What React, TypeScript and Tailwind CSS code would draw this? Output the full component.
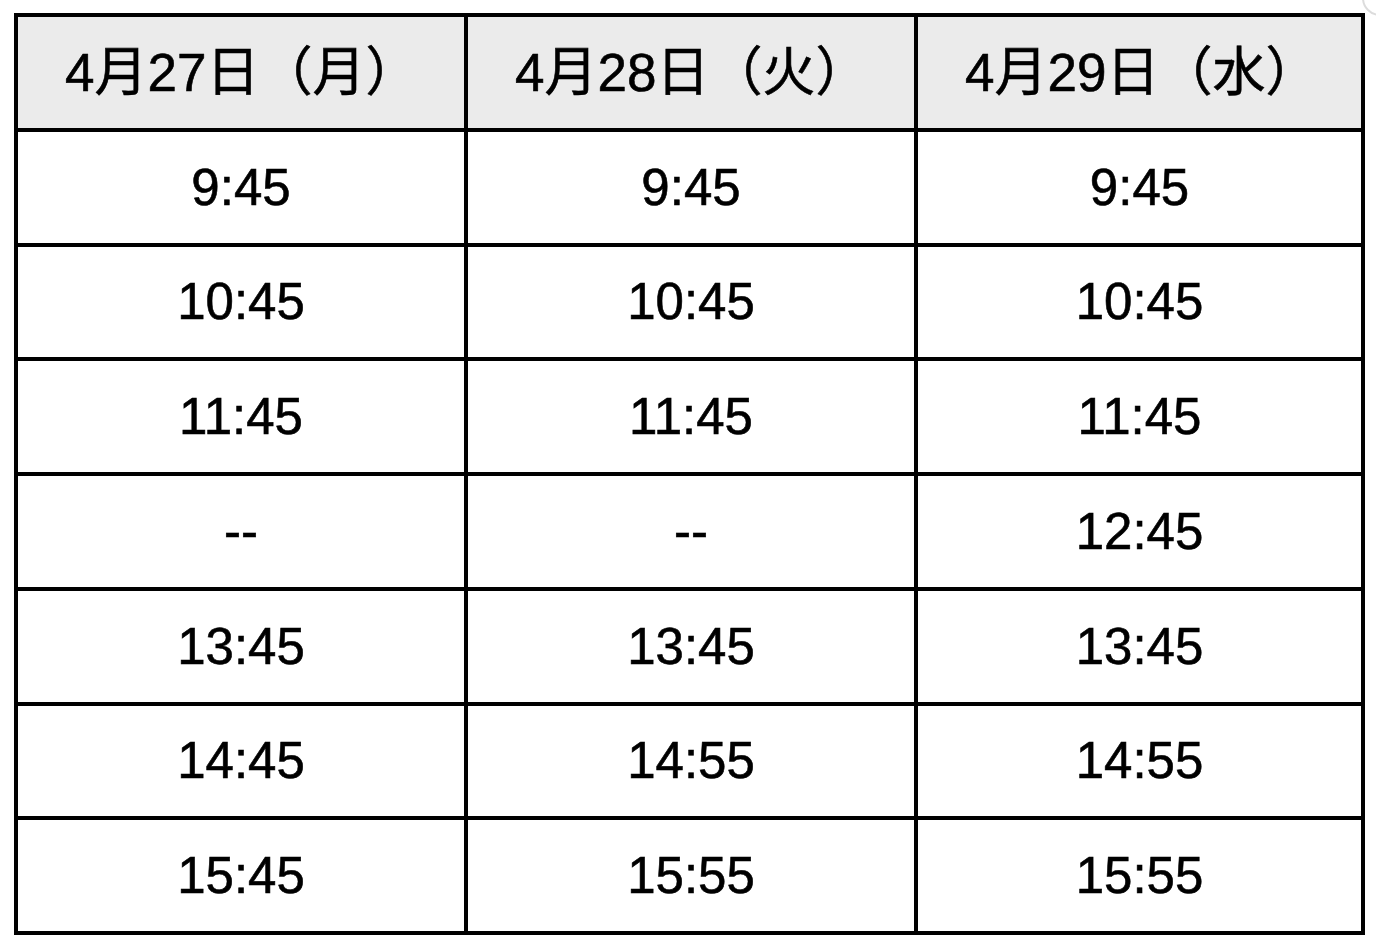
const days = ["4月27日（月）", "4月28日（火）", "4月29日（水）"];

const rows = [
  ["9:45", "9:45", "9:45"],
  ["10:45", "10:45", "10:45"],
  ["11:45", "11:45", "11:45"],
  ["--", "--", "12:45"],
  ["13:45", "13:45", "13:45"],
  ["14:45", "14:55", "14:55"],
  ["15:45", "15:55", "15:55"],
];

export default function App() {
  return (
    <div
      className="relative w-[1376px] h-[948px] bg-white overflow-hidden"
      style={{ fontFamily: '"Liberation Sans", "Noto Sans CJK JP", sans-serif' }}
    >
      {/* faint circle peeking in at the corner */}
      <div className="absolute -right-[22px] -top-[20px] w-[36px] h-[36px] rounded-full border-2 border-[#dcdcdc]" />

      <div className="pl-[14px] pt-[13px]">
        <div className="grid grid-cols-[446px_446px_443px] grid-rows-[repeat(8,110.75px)] gap-[4px] p-[4px] bg-black w-[1351px]">
          {/* Header */}
          {days.map((d) => (
            <div
              key={d}
              className="bg-[#ebebeb] flex items-center pl-[47px] text-[53px] text-black leading-none [-webkit-text-stroke:0.6px_black]"
            >
              {d}
            </div>
          ))}

          {/* Times */}
          {rows.map((row, i) =>
            row.map((t, j) => (
              <div
                key={`${i}-${j}`}
                className="bg-white flex items-center justify-center text-[51px] text-black leading-none [-webkit-text-stroke:0.6px_black]"
              >
                {t}
              </div>
            ))
          )}
        </div>
      </div>
    </div>
  );
}
